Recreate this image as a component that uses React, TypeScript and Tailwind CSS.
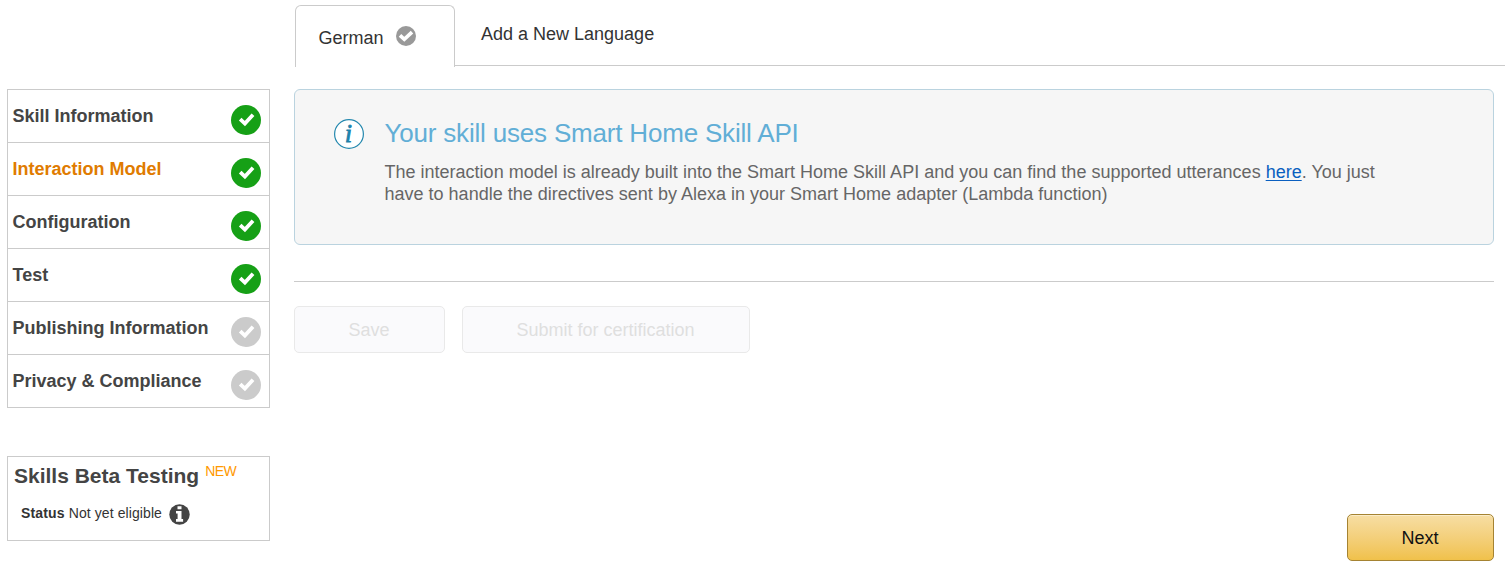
const steps = [
  { label: "Skill Information", done: true, active: false },
  { label: "Interaction Model", done: true, active: true },
  { label: "Configuration", done: true, active: false },
  { label: "Test", done: true, active: false },
  { label: "Publishing Information", done: false, active: false },
  { label: "Privacy & Compliance", done: false, active: false },
];

function StepCheck({ done }: { done: boolean }) {
  return (
    <svg className={done ? "mt-[15px] size-[30px] text-[#16a016]" : "mt-[15px] size-[30px] text-[#cbcbcb]"} viewBox="0 0 30 30">
      <circle cx="15" cy="15" r="15" fill="currentColor" />
      <path d="M9.2 14.2L13.9 18.6L22 9.8" fill="none" stroke="#fff" strokeWidth="3.8" />
    </svg>
  );
}

function Sidebar() {
  return (
    <aside className="ml-[7px] w-[263px] shrink-0 pt-[89px]">
      <nav className="border border-[#cbcbcb]">
        {steps.map((s) => (
          <a key={s.label} className="flex h-[53px] items-start justify-between border-b border-[#cbcbcb] pr-2 pl-[4.5px] last:h-[52px] last:border-b-0">
            <span className={s.active ? "mt-[15px] text-[18px] leading-[22px] font-bold text-[#e07b00]" : "mt-[15px] text-[18px] leading-[22px] font-bold text-[#444]"}>
              {s.label}
            </span>
            <StepCheck done={s.done} />
          </a>
        ))}
      </nav>
      <section className="mt-12 h-[85px] border border-[#cbcbcb]">
        <div className="flex h-[40px] items-start pl-[6px]">
          <h2 className="mt-[6px] text-[21px] leading-[26px] font-bold text-[#444]">Skills Beta Testing</h2>
          <span className="mt-[6px] ml-[6px] text-[14px] leading-[16px] tracking-[-0.5px] text-[#ff9900]">NEW</span>
        </div>
        <div className="flex items-start pl-[13px] text-[14px] leading-[16px] text-[#333]">
          <span className="mt-2 font-bold tracking-[0.15px]">Status</span>
          <span className="mt-2 ml-1 tracking-[0.09px]">Not yet eligible</span>
          <svg className="mt-[7px] ml-[7px] size-[21px]" viewBox="0 0 21 21">
            <circle cx="10.5" cy="10.5" r="10.2" fill="#444" />
            <path d="M8.5 2.2h4v3.1h-4zM7 7h5.5v8h1.6v2.7H7V15h1.6V9.6H7z" fill="#fff" />
          </svg>
        </div>
      </section>
    </aside>
  );
}

function Tabs() {
  return (
    <div className="flex h-[67px] pt-[5px] pl-px text-[18px] leading-[22px] text-[#333]">
      <div className="flex h-[62px] w-[160px] items-start rounded-t-[6px] border border-b-0 border-[#cbcbcb] pl-[22.5px]">
        <span className="mt-[21px]">German</span>
        <svg className="mt-5 ml-3 size-5" viewBox="0 0 20 20">
          <circle cx="10" cy="10" r="10" fill="#999" />
          <path d="M4 9.4L8.3 13.3L16 6.2" fill="none" stroke="#fff" strokeWidth="3.7" />
        </svg>
      </div>
      <div className="h-[61px] flex-1 border-b border-[#cbcbcb] pt-[18px] pl-[26px]">Add a New Language</div>
    </div>
  );
}

export default function App() {
  return (
    <div className="flex h-[573px] w-[1505px] overflow-hidden bg-white font-['Liberation_Sans',Arial,sans-serif]">
      <Sidebar />
      <main className="ml-6 flex-1">
        <Tabs />
        <div className="mr-[11px]">
          <section className="mt-[22px] flex h-[156px] items-start rounded-[6px] border border-[#bad3df] bg-[#f6f6f6] pl-[39px]">
            <svg className="mt-[29px] size-[30px] shrink-0" viewBox="0 0 30 30">
              <circle cx="15" cy="15" r="14.4" fill="#fff" stroke="#2488ae" strokeWidth="1.2" />
              <text x="14.6" y="22.5" textAnchor="middle" fontFamily="Liberation Serif, serif" fontSize="25" fontStyle="italic" fill="#1d82ab" stroke="#1d82ab" strokeWidth="0.9">i</text>
            </svg>
            <div className="ml-[20.5px] pt-[27px]">
              <h1 className="text-[26px] leading-[32px] tracking-[-0.19px] text-[#61aed6]">Your skill uses Smart Home Skill API</h1>
              <p className="mt-3 text-[18px] leading-[22px] tracking-[0.006px] whitespace-nowrap text-[#666]">
                The interaction model is already built into the Smart Home Skill API and you can find the supported utterances{" "}
                <a className="text-[#0a5fc0] underline decoration-1 underline-offset-2">here</a>. You just
                <br />
                have to handle the directives sent by Alexa in your Smart Home adapter (Lambda function)
              </p>
            </div>
          </section>
          <hr className="mt-9 border-t border-[#cbcbcb]" />
          <div className="mt-6 flex gap-[17px] text-[18px] text-[#dfdfdf]">
            <button className="h-[47px] w-[151px] rounded-[5px] border border-[#e9e9e9] bg-[#fafafc] pt-[2px] pr-px">Save</button>
            <button className="h-[47px] w-[288px] rounded-[5px] border border-[#e9e9e9] bg-[#fafafc] pt-[2px] pr-px">Submit for certification</button>
          </div>
          <div className="mt-[161px] flex justify-end">
            <button className="h-[47px] w-[147px] rounded-[5px] border border-[#a58332] bg-linear-to-b from-[#f7dea3] to-[#f0c14a] pt-[2px] pr-px text-[18px] text-[#111] shadow-[inset_0_1px_0_#fbecc8]">Next</button>
          </div>
        </div>
      </main>
    </div>
  );
}
